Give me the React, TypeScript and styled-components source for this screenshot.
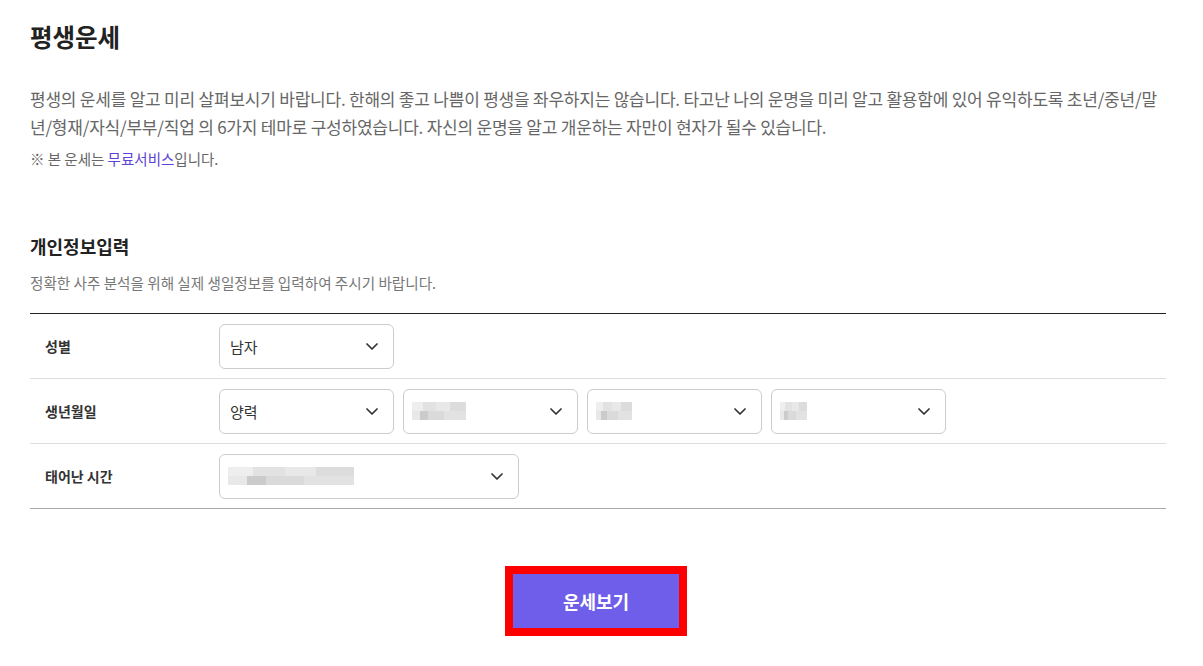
import React from "react";
import styled, { createGlobalStyle } from "styled-components";

const Global = createGlobalStyle`
  html, body { margin: 0; padding: 0; background: #fff; }
  body { font-family: "Noto Sans CJK KR", "Noto Sans", sans-serif; color: #222; }
`;

const Page = styled.div`
  padding: 15px 37px 30px 30px;
`;

const Title = styled.h1`
  margin: 0;
  font-size: 24.5px;
  font-weight: 700;
  line-height: 44px;
  color: #222;
`;

const Desc = styled.p`
  margin: 26px 0 0;
  font-size: 17px;
  line-height: 28px;
  color: #666;
  letter-spacing: -0.22px;
`;

const Note = styled.p`
  margin: 8px 0 0;
  font-size: 14.5px;
  line-height: 20px;
  color: #666;
`;

const Link = styled.span`
  color: #5a43d6;
`;

const SectionTitle = styled.h2`
  margin: 64px 0 0;
  font-size: 18px;
  font-weight: 700;
  line-height: 26px;
  color: #222;
`;

const SectionSub = styled.p`
  margin: 14px 0 0;
  font-size: 14.6px;
  line-height: 20px;
  color: #777;
`;

const Table = styled.div`
  margin-top: 20px;
  border-top: 1px solid #222;
  border-bottom: 1px solid #aaa;
`;

const Row = styled.div<{ $last?: boolean }>`
  display: flex;
  align-items: center;
  height: 64px;
  border-bottom: ${(p) => (p.$last ? "none" : "1px solid #ddd")};
`;

const Label = styled.div`
  box-sizing: border-box;
  width: 189px;
  padding-left: 15px;
  font-size: 14px;
  font-weight: 700;
  color: #333;
`;

const Fields = styled.div`
  display: flex;
  gap: 9px;
`;

const Select = styled.div<{ $w: number }>`
  box-sizing: border-box;
  width: ${(p) => p.$w}px;
  height: 45px;
  border: 1px solid #ccc;
  border-radius: 6px;
  display: flex;
  align-items: center;
  justify-content: space-between;
  padding: 0 15px 0 10px;
  font-size: 15px;
  color: #333;
  background: #fff;
`;

const Masked = styled.span<{ $w: number }>`
  display: inline-block;
  width: ${(p) => p.$w}px;
  height: 18px;
  margin-left: -2px;
  background:
    linear-gradient(90deg, #eee 0 20%, #e2e2e2 20% 45%, #e8e8e8 45% 70%, #dcdcdc 70% 100%) top / 100% 50% no-repeat,
    linear-gradient(90deg, #e8e8e8 0 15%, #cbcbcb 15% 30%, #dadada 30% 60%, #e2e2e2 60% 100%) bottom / 100% 50% no-repeat;
`;

const Chevron = () => (
  <svg width="12" height="7" viewBox="0 0 12 7" fill="none">
    <path d="M1 1l5 5 5-5" stroke="#333" strokeWidth="1.7" strokeLinecap="round" strokeLinejoin="round" />
  </svg>
);

const ButtonWrap = styled.div`
  display: flex;
  justify-content: center;
  margin-top: 57px;
  padding-right: 4px;
`;

const Button = styled.button`
  width: 182px;
  height: 70px;
  border: 8px solid #ff0000;
  background: #6f5ee9;
  color: #fff;
  font-family: inherit;
  font-size: 18px;
  font-weight: 700;
  cursor: pointer;
`;

const Field = ({ w, children }: { w: number; children: React.ReactNode }) => (
  <Select $w={w}>
    {children}
    <Chevron />
  </Select>
);

export default function App() {
  return (
    <>
      <Global />
      <Page>
        <Title>평생운세</Title>
        <Desc>
          평생의 운세를 알고 미리 살펴보시기 바랍니다. 한해의 좋고 나쁨이 평생을 좌우하지는 않습니다. 타고난 나의 운명을 미리 알고 활용함에 있어 유익하도록 초년/중년/말년/형재/자식/부부/직업 의 6가지 테마로 구성하였습니다. 자신의 운명을 알고 개운하는 자만이 현자가 될수 있습니다.
        </Desc>
        <Note>
          ※ 본 운세는 <Link>무료서비스</Link>입니다.
        </Note>
        <SectionTitle>개인정보입력</SectionTitle>
        <SectionSub>정확한 사주 분석을 위해 실제 생일정보를 입력하여 주시기 바랍니다.</SectionSub>
        <Table>
          <Row>
            <Label>성별</Label>
            <Fields>
              <Field w={175}>남자</Field>
            </Fields>
          </Row>
          <Row>
            <Label>생년월일</Label>
            <Fields>
              <Field w={175}>양력</Field>
              <Field w={175}><Masked $w={54} /></Field>
              <Field w={175}><Masked $w={36} /></Field>
              <Field w={175}><Masked $w={27} /></Field>
            </Fields>
          </Row>
          <Row $last>
            <Label>태어난 시간</Label>
            <Fields>
              <Field w={300}><Masked $w={126} /></Field>
            </Fields>
          </Row>
        </Table>
        <ButtonWrap>
          <Button>운세보기</Button>
        </ButtonWrap>
      </Page>
    </>
  );
}
